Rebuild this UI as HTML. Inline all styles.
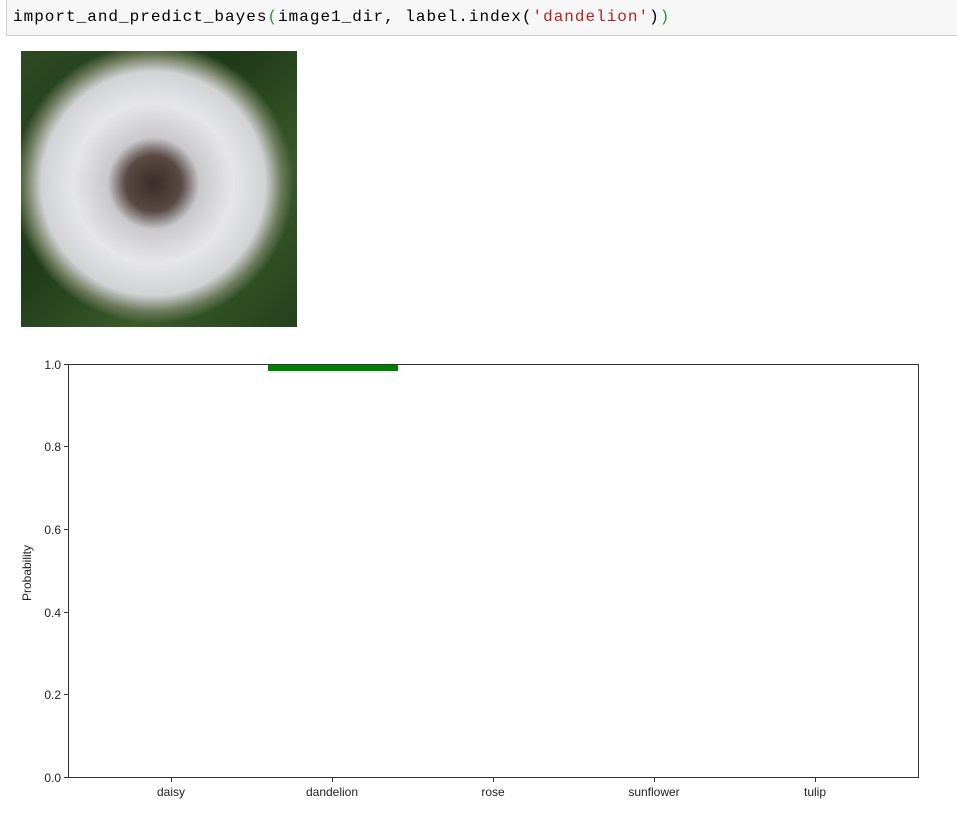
<!DOCTYPE html>
<html><head><style>
body{margin:0;background:#fff;width:957px;height:815px;overflow:hidden;position:relative;font-family:"Liberation Sans",sans-serif}
.cell{position:absolute;left:6px;top:-2px;width:960px;height:38px;background:#f7f7f7;border:1px solid #cfcfcf;border-radius:2px;box-sizing:border-box}
.code{position:absolute;left:13px;top:8px;font-family:"Liberation Mono",monospace;font-size:16px;color:#000;white-space:pre;letter-spacing:1px}
.img{position:absolute;left:21px;top:51px;width:276px;height:276px;background:radial-gradient(circle at 48% 48%,#3a2c28 0,#5a4a46 28px,#8a8080 36px,#c9c9cc 46px,#e6e6ea 80px,#d0d2d4 112px,#6d7a5c 128px,rgba(40,70,30,0) 140px),linear-gradient(135deg,#2d4a22,#1e3a18 40%,#3a5a2a 70%,#24401c)}
</style></head><body>
<div class="cell"></div>
<div class="code">import_and_predict_bayes<span style="color:#2a9a2a">(</span>image1_dir, label.index(<span style="color:#ba2121">'dandelion'</span>)<span style="color:#2a9a2a">)</span></div>
<div class="img"></div>
<svg style="position:absolute;left:0;top:0" width="957" height="815">
<rect x="268" y="364" width="130" height="7" fill="#008000"/>
<rect x="68.5" y="364.5" width="850" height="413" fill="none" stroke="#333" stroke-width="1"/>
<g stroke="#333">
<line x1="64" y1="364.5" x2="68" y2="364.5"/><line x1="64" y1="446.5" x2="68" y2="446.5"/><line x1="64" y1="529.5" x2="68" y2="529.5"/><line x1="64" y1="612.5" x2="68" y2="612.5"/><line x1="64" y1="694.5" x2="68" y2="694.5"/><line x1="64" y1="777.5" x2="68" y2="777.5"/>
<line x1="171.5" y1="778" x2="171.5" y2="782"/><line x1="332.5" y1="778" x2="332.5" y2="782"/><line x1="493.5" y1="778" x2="493.5" y2="782"/><line x1="654.5" y1="778" x2="654.5" y2="782"/><line x1="815.5" y1="778" x2="815.5" y2="782"/>
</g>
<g font-family="Liberation Sans,sans-serif" font-size="12" fill="#222" text-anchor="end">
<text x="61" y="369">1.0</text><text x="61" y="451">0.8</text><text x="61" y="534">0.6</text><text x="61" y="617">0.4</text><text x="61" y="699">0.2</text><text x="61" y="782">0.0</text>
</g>
<g font-family="Liberation Sans,sans-serif" font-size="12" fill="#222" text-anchor="middle">
<text x="171" y="796">daisy</text><text x="332" y="796">dandelion</text><text x="493" y="796">rose</text><text x="654" y="796">sunflower</text><text x="815" y="796">tulip</text>
<text transform="translate(31,573) rotate(-90)">Probability</text>
</g>
</svg>
</body></html>
